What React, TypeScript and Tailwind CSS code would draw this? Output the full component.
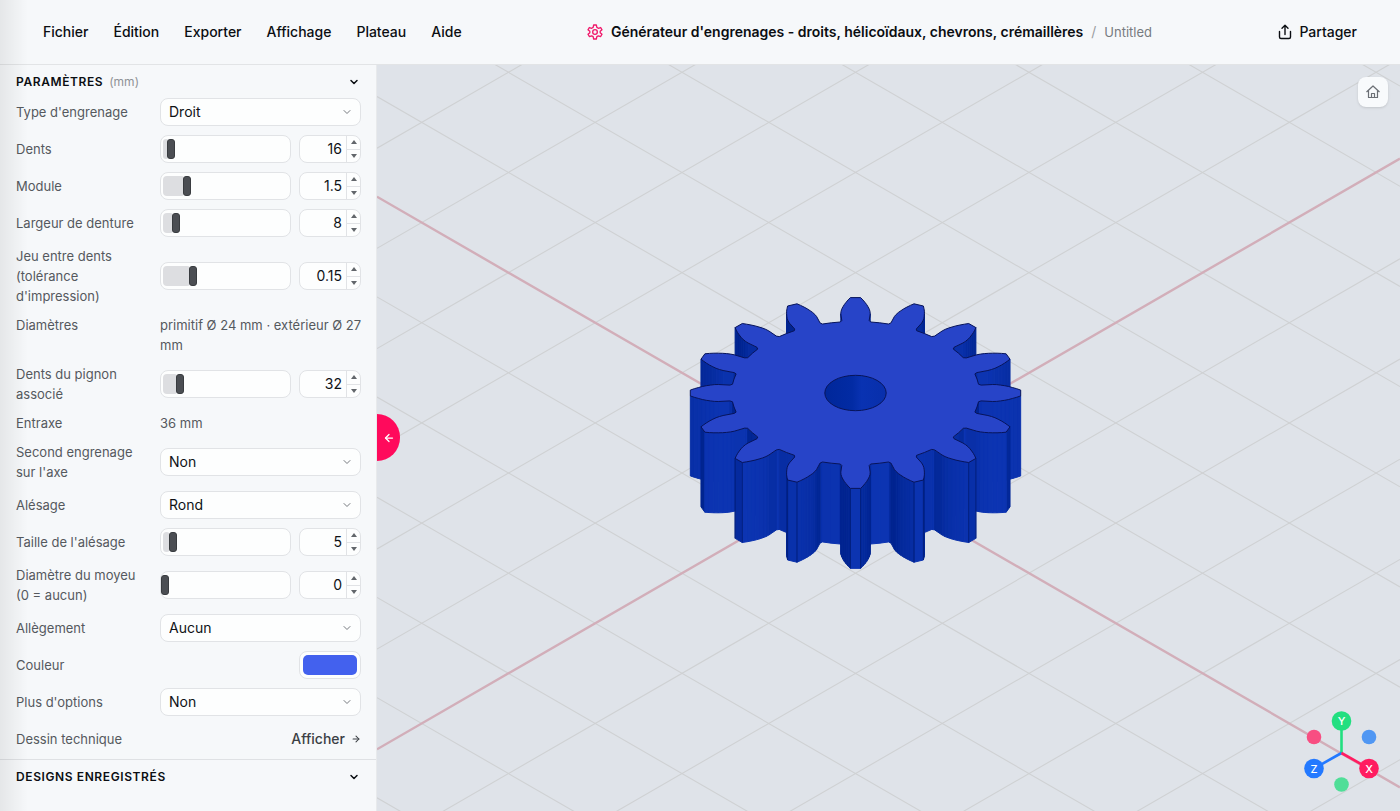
import React, { useState } from "react";
import { ArrowLeft, ArrowRight, ChevronDown } from "lucide-react";

const MENUS = ["Fichier", "Édition", "Exporter", "Affichage", "Plateau", "Aide"];

const SCALE = 12.24;
const TILT = 0.57735;
const CENTER = { x: 478.5, y: 328 };
const TEETH = 16;
const MODULE = 1.5;
const HEIGHT = 80;

type Point = { x: number; y: number };

const polar = (radius: number, angle: number): Point => ({
  x: CENTER.x + radius * SCALE * Math.sin(angle),
  y: CENTER.y - radius * SCALE * Math.cos(angle) * TILT
});

// Involute half profile of one tooth, from root to tip
const buildHalfTooth = () => {
  const pitch = (TEETH * MODULE) / 2;
  const base = pitch * Math.cos(Math.PI / 9);
  const tip = pitch + MODULE;
  const root = pitch - 1.25 * MODULE;
  const inv20 = Math.tan(Math.PI / 9) - Math.PI / 9;
  const half = (MODULE * Math.PI / 4 - 0.075) / pitch + inv20;
  const profile: [number, number][] = [[root, half + 0.016], [root + 0.2, half + 0.002], [base, half]];
  for (let i = 1; i <= 7; i++) {
    const r = base + (tip - base) * i / 7;
    const a = Math.acos(base / r);
    profile.push([r, half - (Math.tan(a) - a)]);
  }
  return profile;
};

const buildOutline = () => {
  const halfTooth = buildHalfTooth();
  const points: Point[] = [];
  const creases: number[] = [];
  for (let i = 0; i < TEETH; i++) {
    const middle = i * 2 * Math.PI / TEETH;
    halfTooth.forEach(([r, a]) => points.push(polar(r, middle - a)));
    creases.push(points.length - 1, points.length);
    [...halfTooth].reverse().forEach(([r, a]) => points.push(polar(r, middle + a)));
    points.push(polar(halfTooth[0][0], middle + Math.PI / TEETH));
  }
  return { points, creases };
};

const wallColor = (nx: number, ny: number) => {
  const angle = Math.atan2(nx, ny);
  const t = Math.max(0, Math.cos(Math.min(Math.PI / 2, Math.abs(angle - 0.14) * 1.25)));
  return `rgb(${Math.round(12 * t)}, ${Math.round(36 + 16 * t)}, ${Math.round(144 + 34 * t)})`;
};

const toPath = (points: Point[]) => "M" + points.map(p => `${p.x.toFixed(1)} ${p.y.toFixed(1)}`).join("L") + "Z";

const Gear = () => {
  const { points, creases } = buildOutline();
  const walls = points.map((a, i) => {
    const b = points[(i + 1) % points.length];
    const dx = b.x - a.x;
    const dy = (b.y - a.y) / TILT;
    const length = Math.hypot(dx, dy) || 1;
    // The outline runs clockwise, so the outward normal faces the viewer when dx is negative
    return { a, b, nx: dy / length, ny: -dx / length, depth: (a.y + b.y) / 2 };
  }).filter(w => w.ny > 0).sort((a, b) => a.depth - b.depth);
  return <g strokeLinejoin="round">
      {walls.map((w, i) => {
      const color = wallColor(w.nx, w.ny);
      return <path key={i} fill={color} stroke={color} strokeWidth="1" d={`M${w.a.x} ${w.a.y}L${w.b.x} ${w.b.y}V${w.b.y + HEIGHT}L${w.a.x} ${w.a.y + HEIGHT}Z`} />;
    })}
      {creases.filter(i => points[i].y > CENTER.y + 45).map(i => <path key={i} d={`M${points[i].x} ${points[i].y}v${HEIGHT}`} stroke="#001a70" strokeWidth="0.8" />)}
      <path d={toPath(points)} fill="#2744c8" stroke="#07145a" strokeWidth="1" />
      <ellipse cx={CENTER.x} cy={CENTER.y} rx="30.7" ry="17.7" fill="url(#bore)" stroke="#07145a" />
    </g>;
};

const Scene = () => {
  const lines = Array.from({ length: 17 }, (_, i) => i - 8);
  const groundY = CENTER.y + HEIGHT;
  const left = CENTER.x * TILT;
  const right = (1023 - CENTER.x) * TILT;
  return <svg className="absolute inset-0 w-full h-full" viewBox="0 0 1023 746" preserveAspectRatio="xMidYMid slice" fill="none" aria-label="Aperçu de l'engrenage">
      <defs>
        <linearGradient id="bore">
          <stop offset="0" stopColor="#00279a" />
          <stop offset="0.45" stopColor="#022ba4" />
          <stop offset="0.6" stopColor="#0932b2" />
          <stop offset="1" stopColor="#082fab" />
        </linearGradient>
      </defs>
      {lines.filter(k => k !== 0).map(k => {
      const y = groundY + k * 100.18;
      return <path key={k} stroke="#cfd1d3" strokeWidth="1.1" d={`M0 ${y - left}L1023 ${y + right}M0 ${y + left}L1023 ${y - right}`} />;
    })}
      <path stroke="#d2aeb9" strokeWidth="2.4" d={`M0 ${groundY - left}L1023 ${groundY + right}M0 ${groundY + left}L1023 ${groundY - right}`} />
      <Gear />
    </svg>;
};

const AxisGizmo = () => <svg className="absolute right-[18px] bottom-4 w-20 h-[88px]" viewBox="0 0 80 88" fill="none" aria-label="Axes">
    <g strokeWidth="2.6">
      <path d="M39.500 46V14" stroke="#22df80" />
      <path d="M39.500 46L12 61.500" stroke="#2379ff" />
      <path d="M39.500 46L67 61.500" stroke="#ff1c60" />
    </g>
    <circle cx="12" cy="30" r="7.300" fill="#f84e82" />
    <circle cx="67" cy="30" r="7.300" fill="#5097f3" />
    <circle cx="39.500" cy="77.500" r="7.300" fill="#50de98" />
    <circle cx="39.500" cy="14" r="9.800" fill="#22df80" />
    <circle cx="12" cy="61.500" r="9.800" fill="#2379ff" />
    <circle cx="67" cy="61.500" r="9.800" fill="#ff1c60" />
    <g fill="#fff" fontFamily="Inter, sans-serif" fontSize="11" fontWeight="500" textAnchor="middle">
      <text x="39.500" y="18">Y</text>
      <text x="12" y="66">Z</text>
      <text x="67" y="66">X</text>
    </g>
  </svg>;

interface RowProps {
  label: string;
  htmlFor?: string;
  children: React.ReactNode;
}

const Row: React.FC<RowProps> = ({ label, htmlFor, children }) => <div className="grid grid-cols-[128px_1fr] gap-x-4 items-center text-[13px] text-[#55595e]">
    {htmlFor ? <label htmlFor={htmlFor}>{label}</label> : <span className="self-start">{label}</span>}
    {children}
  </div>;

interface SliderRowProps {
  id: string;
  label: string;
  initial: number;
  min: number;
  max: number;
  step?: number;
}

const SliderRow: React.FC<SliderRowProps> = ({ id, label, initial, min, max, step = 1 }) => {
  const [value, setValue] = useState(initial);
  const ratio = (value - min) / (max - min);
  const nudge = (direction: number) => setValue(Math.min(max, Math.max(min, Number((value + direction * step).toFixed(2)))));
  return <Row label={label} htmlFor={id}>
      <div className="flex gap-2">
        <div className="relative flex-1 h-7 rounded-lg border border-[#e1e3e6] bg-[#fdfefe]">
          <div className="absolute left-0.5 top-[3px] bottom-[3px] rounded bg-[#dddee1]" style={{ width: `${ratio * 93}%` }} />
          <input type="range" aria-label={label} min={min} max={max} step={step} value={value} onChange={e => setValue(Number(e.target.value))} className="absolute inset-0 w-full h-full appearance-none bg-transparent [&::-webkit-slider-thumb]:appearance-none [&::-webkit-slider-thumb]:w-2 [&::-webkit-slider-thumb]:h-5 [&::-webkit-slider-thumb]:rounded-[3px] [&::-webkit-slider-thumb]:bg-[#4b4e53] [&::-webkit-slider-thumb]:border [&::-webkit-slider-thumb]:border-[#393c40]" />
        </div>
        <div className="flex w-[62px] h-7 rounded-lg border border-[#e1e3e6] bg-[#fdfefe] overflow-hidden">
          <input id={id} type="text" inputMode="decimal" value={value} onChange={e => setValue(Number(e.target.value) || 0)} className="w-0 flex-1 bg-transparent pr-1 text-right text-sm text-[#0f1216] outline-none" />
          <div className="flex flex-col w-[14px] border-l border-[#e1e3e6]">
            <button type="button" aria-label="Augmenter" onClick={() => nudge(1)} className="flex-1 flex items-center justify-center border-b border-[#e1e3e6]">
              <svg className="w-1.5 h-1" viewBox="0 0 6 4"><path d="M3 0L6 4H0Z" fill="#62666b" /></svg>
            </button>
            <button type="button" aria-label="Diminuer" onClick={() => nudge(-1)} className="flex-1 flex items-center justify-center">
              <svg className="w-1.5 h-1" viewBox="0 0 6 4"><path d="M3 4L6 0H0Z" fill="#62666b" /></svg>
            </button>
          </div>
        </div>
      </div>
    </Row>;
};

interface SelectRowProps {
  id: string;
  label: string;
  options: string[];
}

const SelectRow: React.FC<SelectRowProps> = ({ id, label, options }) => <Row label={label} htmlFor={id}>
    <div className="relative">
      <select id={id} className="block w-full h-7 appearance-none rounded-lg border border-[#e1e3e6] bg-[#fdfefe] px-2 text-sm text-[#0f1216] outline-none">
        {options.map(option => <option key={option}>{option}</option>)}
      </select>
      <ChevronDown className="absolute right-2 top-2 w-3 h-3 text-[#75797e] pointer-events-none" strokeWidth={2} />
    </div>
  </Row>;

interface SectionTitleProps {
  title: string;
  unit?: string;
}

const SectionTitle: React.FC<SectionTitleProps> = ({ title, unit }) => <button type="button" className="flex w-full h-[33px] items-center justify-between">
    <h2 className="text-xs font-semibold tracking-wider text-[#0b0e12]">
      {title}
      {unit && <span className="ml-1.5 font-normal tracking-normal text-[#8f9296]">{unit}</span>}
    </h2>
    <ChevronDown className="w-3 h-3 mr-px text-[#0b0e12]" strokeWidth={3} />
  </button>;

const Header = () => <header className="flex shrink-0 h-[65px] items-center border-b border-[#e2e4e6] px-[43px] pb-px">
    <nav className="flex gap-[25px] font-medium text-[#0b0e12]">
      {MENUS.map(menu => <button key={menu} type="button">{menu}</button>)}
    </nav>
    <div className="flex flex-1 items-center justify-center">
      <svg className="w-4 h-4 mr-2 text-[#f0186a]" viewBox="0 0 24 24" fill="none" stroke="currentColor" strokeWidth="2" strokeLinejoin="round">
        <path d="M10 1.500h4l.8 3.600 2.200 1.300 3.500-1.100 2 3.400L19.800 11v2l2.700 2.400-2 3.400-3.500-1.100-2.200 1.300-.8 3.500h-4l-.8-3.500L7 17.700l-3.500 1.100-2-3.400L4.200 13v-2L1.500 8.700l2-3.400L7 6.400l2.200-1.300Z" />
        <circle cx="12" cy="12" r="3.500" />
      </svg>
      <h1 className="font-semibold text-[#0b0e12]">Générateur d'engrenages - droits, hélicoïdaux, chevrons, crémaillères</h1>
      <span className="mx-2 text-[#9a9da1]">/</span>
      <span className="text-[13px] text-[#777b80]">Untitled</span>
    </div>
    <button type="button" className="flex items-center gap-1.5 font-medium text-[#0b0e12]">
      <svg className="w-4 h-4" viewBox="0 0 16 16" fill="none" stroke="currentColor" strokeWidth="1.400" strokeLinecap="round" strokeLinejoin="round">
        <path d="M8 10.500V1.500M5 4.300l3-3 3 3M2.500 7.500v5.500a1.500 1.500 0 0 0 1.500 1.500h8a1.500 1.500 0 0 0 1.500-1.500V7.500" />
      </svg>
      Partager
    </button>
  </header>;

const Sidebar = () => <aside className="w-[377px] shrink-0 border-r border-[#e8eaec]">
    <section className="pl-4 pr-[15px]">
      <SectionTitle title="PARAMÈTRES" unit="(mm)" />
      <div className="flex flex-col gap-[9px] pb-1.5">
        <SelectRow id="type" label="Type d'engrenage" options={["Droit", "Hélicoïdal", "Chevron", "Crémaillère"]} />
        <SliderRow id="teeth" label="Dents" initial={16} min={10} max={140} />
        <SliderRow id="module" label="Module" initial={1.5} min={0.5} max={6} step={0.1} />
        <SliderRow id="width" label="Largeur de denture" initial={8} min={1} max={80} />
        <SliderRow id="backlash" label="Jeu entre dents (tolérance d'impression)" initial={0.15} min={0} max={0.65} step={0.05} />
        <Row label="Diamètres"><span className="-mr-2">primitif Ø 24 mm · extérieur Ø 27 mm</span></Row>
        <SliderRow id="pinion" label="Dents du pignon associé" initial={32} min={16} max={144} />
        <Row label="Entraxe"><span>36 mm</span></Row>
        <SelectRow id="second" label="Second engrenage sur l'axe" options={["Non", "Oui"]} />
        <SelectRow id="bore-type" label="Alésage" options={["Rond", "Hexagonal", "Aucun"]} />
        <SliderRow id="bore-size" label="Taille de l'alésage" initial={5} min={1} max={65} />
        <SliderRow id="hub" label="Diamètre du moyeu (0 = aucun)" initial={0} min={0} max={60} />
        <SelectRow id="lightening" label="Allègement" options={["Aucun", "Trous", "Rayons"]} />
        <Row label="Couleur" htmlFor="color">
          <input id="color" type="color" defaultValue="#4361ee" className="justify-self-end w-[62px] h-7 rounded-lg border border-[#e1e3e6] bg-[#fdfefe] p-[3px] [&::-webkit-color-swatch-wrapper]:p-0 [&::-webkit-color-swatch]:border-0 [&::-webkit-color-swatch]:rounded-[5px]" />
        </Row>
        <SelectRow id="more" label="Plus d'options" options={["Non", "Oui"]} />
        <div className="flex h-7 items-center justify-between text-[13px] text-[#55595e]">
          <span>Dessin technique</span>
          <button type="button" className="flex h-7 items-center gap-1.5 text-sm font-medium text-[#3b3f44]">
            Afficher
            <ArrowRight className="w-[10px] h-[10px]" strokeWidth={2.5} />
          </button>
        </div>
      </div>
    </section>
    <section className="border-t border-[#dfe1e4] pl-4 pr-[15px]">
      <SectionTitle title="DESIGNS ENREGISTRÉS" />
    </section>
  </aside>;

const App = () => {
  return <div className="relative flex flex-col h-screen overflow-hidden bg-[#f6f8fa] font-['Inter',sans-serif] text-sm leading-[20px]">
      <div className="absolute inset-y-0 left-0 w-7 bg-linear-to-r from-black/7 to-transparent pointer-events-none" />
      <Header />
      <div className="flex flex-1 min-h-0">
        <Sidebar />
        <main className="relative flex-1 min-w-0 overflow-hidden bg-[#dfe3e9]">
          <Scene />
          <button type="button" aria-label="Replier le panneau" className="absolute left-0 top-[349px] w-[23px] h-[47px] rounded-r-full bg-[#ff0a5c] text-white flex items-center justify-center">
            <ArrowLeft className="w-3 h-3" strokeWidth={2.5} />
          </button>
          <button type="button" aria-label="Vue par défaut" className="absolute right-3 top-3 w-[30px] h-[30px] rounded-lg bg-[#f8fafc] shadow-sm flex items-center justify-center text-[#6b6f75]">
            <svg className="w-4 h-4" viewBox="0 0 16 16" fill="none" stroke="currentColor" strokeWidth="1.200" strokeLinejoin="round">
              <path d="M1.500 8L8 2l6.500 6M3.500 6.500V13.500h9V6.500M6.500 13.500V9.500h3V13.500" />
            </svg>
          </button>
          <AxisGizmo />
        </main>
      </div>
    </div>;
};

export default App;
